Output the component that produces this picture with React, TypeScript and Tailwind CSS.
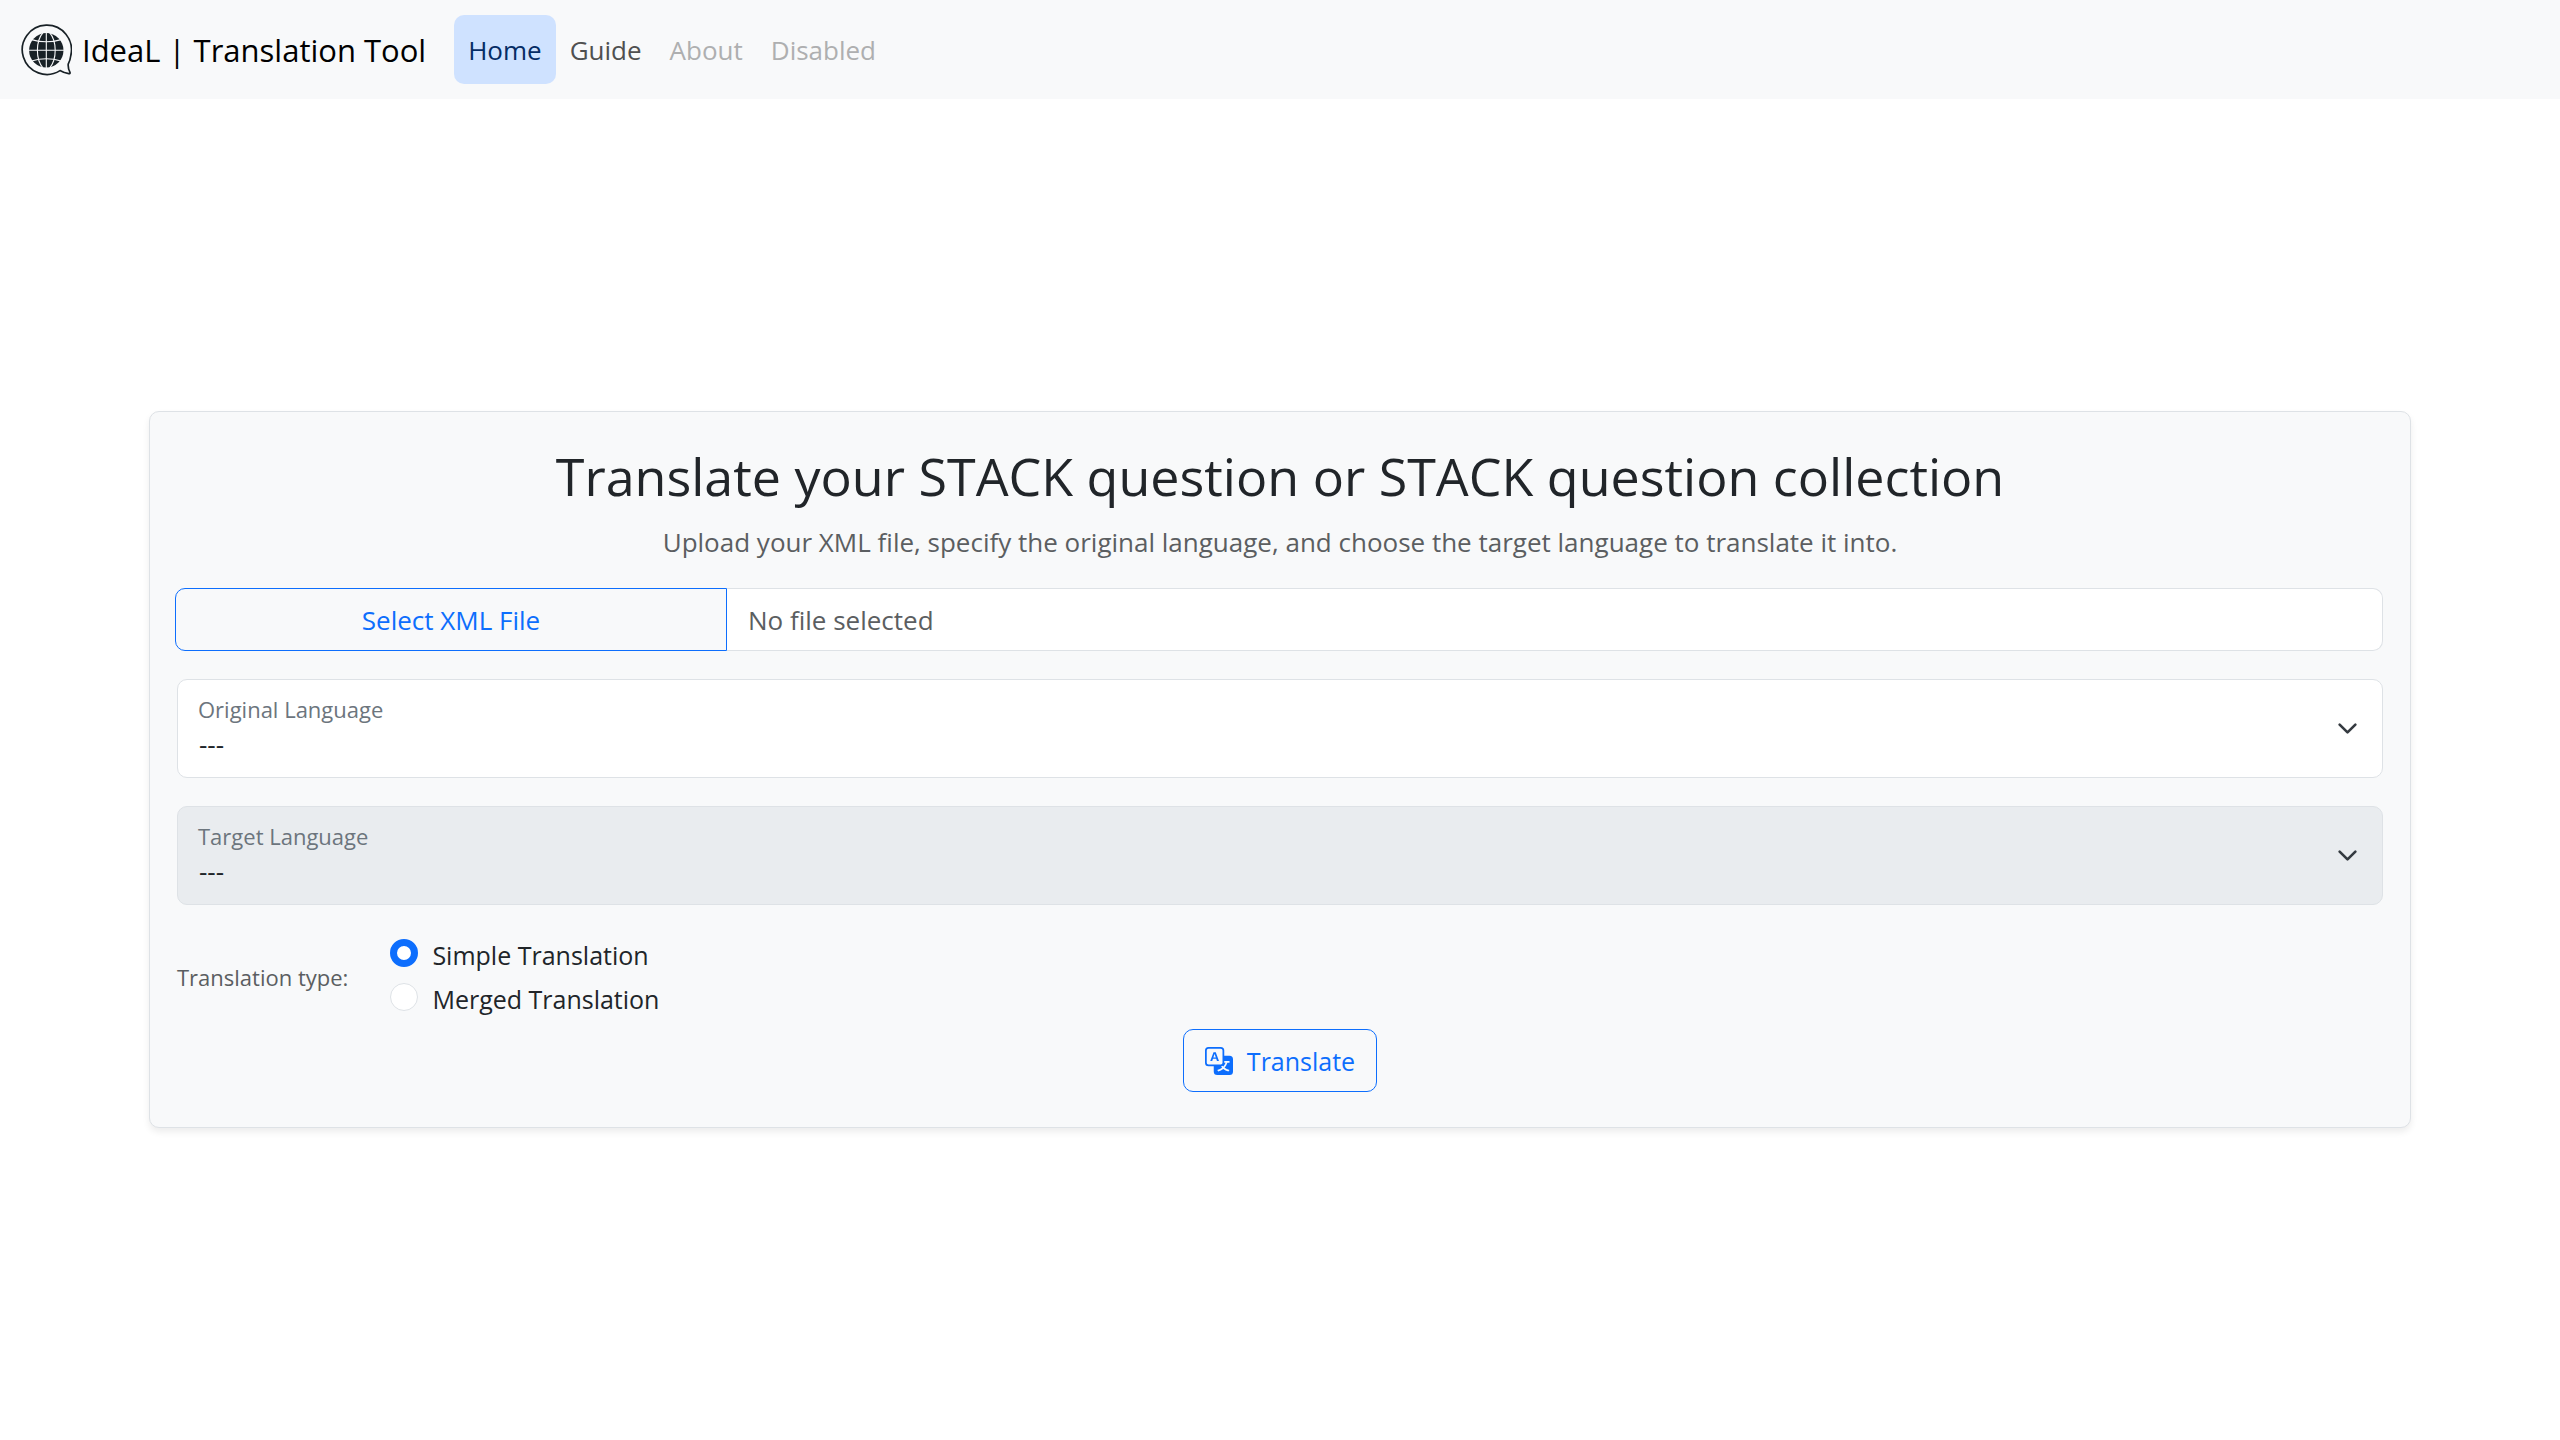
import { useState } from "react";
import { BsTranslate } from "react-icons/bs";

function Logo() {
  return (
    <svg viewBox="0 0 52 52" className="size-[52px]" fill="none" aria-hidden="true">
      <path
        d="M40 46.6 A24.6 24.6 0 1 1 50.8 31.5 Q50.3 36 48.2 40.2 C48 43.4 48.8 46.2 50 48.4 Q50.4 49.8 48.8 49.7 Q44 49 40 46.6 Z"
        stroke="#182126"
        strokeWidth="1.7"
        strokeLinejoin="round"
      />
      <circle cx="26.3" cy="26.3" r="17.2" fill="#182126" />
      <g stroke="#f8f9fa" strokeWidth="1.1">
        <path d="M26.3 8v37M8 26.3h37" />
        <path d="M23 8.6Q17.4 15 17.4 26.3T23 44M29.6 8.6Q35.2 15 35.2 26.3T29.6 44" />
        <path d="M11.5 15.6Q26.3 20 41.1 15.6M11.5 37Q26.3 32.6 41.1 37" />
      </g>
    </svg>
  );
}

const navLinks = [
  { label: "Home", className: "bg-[#cfe2ff] text-[#052c65]" },
  { label: "Guide", className: "text-[#4f5050]" },
  { label: "About", className: "text-[#aeafb0]" },
  { label: "Disabled", className: "text-[#aeafb0]" },
];

function LanguageSelect({ id, label, disabled = false }: { id: string; label: string; disabled?: boolean }) {
  return (
    <div className="relative mb-7">
      <select
        id={id}
        disabled={disabled}
        className="block h-[99px] w-full appearance-none rounded-[10px] border border-[#dee2e6] bg-white px-[21px] pt-[30px] text-[26px] text-[#212529] disabled:bg-[#e9ecef] disabled:opacity-100"
      >
        <option>---</option>
      </select>
      <label htmlFor={id} className="pointer-events-none absolute top-[13px] left-[21px] text-[22px] leading-[34px] text-[#6c757d]">
        {label}
      </label>
      <svg
        viewBox="0 0 16 16"
        className="pointer-events-none absolute top-[39px] right-[25px] size-[21px]"
        fill="none"
        stroke="#343a40"
        strokeWidth="2"
        strokeLinecap="round"
        strokeLinejoin="round"
        aria-hidden="true"
      >
        <path d="m2 5 6 6 6-6" />
      </svg>
    </div>
  );
}

function TypeOption({ label, checked, onSelect }: { label: string; checked: boolean; onSelect: () => void }) {
  return (
    <label className="flex h-11 items-center gap-[14px]">
      <input
        type="radio"
        name="translation-type"
        checked={checked}
        onChange={onSelect}
        className="mb-1 size-7 appearance-none rounded-full border border-[#dee2e6] bg-white checked:border-[7px] checked:border-[#0d6efd]"
      />
      {label}
    </label>
  );
}

export default function App() {
  const [type, setType] = useState("Simple Translation");

  return (
    <div className="flex min-h-screen flex-col bg-white font-['Open_Sans',sans-serif] text-[26px] leading-[42px] text-[#212529]">
      <nav className="flex h-[99px] items-center bg-[#f8f9fa] px-5">
        <a href="#" className="mr-7 flex items-center gap-[10px] text-[31px] text-black">
          <Logo />
          IdeaL | Translation Tool
        </a>
        {navLinks.map((link) => (
          <a
            key={link.label}
            href="#"
            className={`flex h-[69px] items-center rounded-[10px] px-[14px] ${link.className}`}
          >
            {link.label}
          </a>
        ))}
      </nav>

      <main className="flex flex-1 items-center px-[149px]">
        <form className="w-full rounded-[10px] border border-[#dee2e6] bg-[#f8f9fa] px-[27px] pt-[30px] pb-[35px] shadow-[0_4px_7px_rgba(0,0,0,0.075)]">
          <h1 className="mb-3 text-center text-[52px] leading-[67px]">
            Translate your STACK question or STACK question collection
          </h1>
          <p className="mb-[25px] text-center text-[#5b5e61]">
            Upload your XML file, specify the original language, and choose the target language to translate it into.
          </p>

          <div className="mb-7 -ml-[2px] flex h-[63px]">
            <button type="button" className="w-1/4 rounded-l-[10px] border border-[#0d6efd] text-[#0d6efd]">
              Select XML File
            </button>
            <input
              type="text"
              readOnly
              aria-label="Selected file"
              value="No file selected"
              className="min-w-0 flex-1 rounded-r-[10px] border border-l-0 border-[#dee2e6] bg-white px-[21px] text-[#5b5e61]"
            />
          </div>

          <LanguageSelect id="original-language" label="Original Language" />
          <LanguageSelect id="target-language" label="Target Language" disabled />

          <fieldset className="mb-2 flex items-center gap-[42px]" aria-labelledby="type-label">
            <span id="type-label" className="text-[22px] text-[#5b5e61]">
              Translation type:
            </span>
            <div className="text-[25px]">
              {["Simple Translation", "Merged Translation"].map((label) => (
                <TypeOption key={label} label={label} checked={type === label} onSelect={() => setType(label)} />
              ))}
            </div>
          </fieldset>

          <button
            type="button"
            className="mx-auto flex h-[63px] items-center gap-[14px] rounded-[10px] border border-[#0d6efd] px-[21px] text-[25px] text-[#0d6efd]"
          >
            <BsTranslate className="size-7" />
            Translate
          </button>
        </form>
      </main>
    </div>
  );
}
